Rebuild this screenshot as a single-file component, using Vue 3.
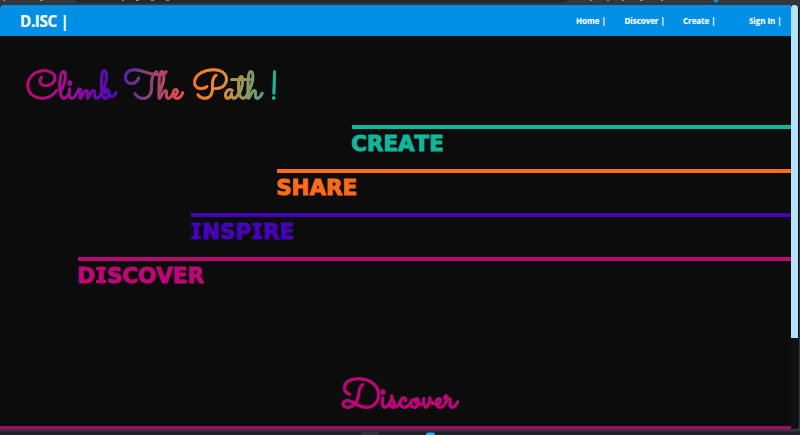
<script setup>
const links = [
  { label: 'Home |', key: 'home' },
  { label: 'Discover |', key: 'discover' },
  { label: 'Create |', key: 'create' },
  { label: 'Sign In |', key: 'sign' },
]
const steps = ['CREATE', 'SHARE', 'INSPIRE', 'DISCOVER']
</script>

<template>
  <div class="screen">
    <div class="chrome">
      <svg width="800" height="5" viewBox="0 0 800 5">
        <rect width="800" height="5" fill="#34363c" />
        <path d="M75 0H568Q566 3 560 3H82Q77 3 75 0Z" fill="#25262c" />
        <path d="M3 .5h2M40 .5h3M122 .5h2M136 .5h3M151 .5h3M166 .5h3M590 .5h2M607 .5h2M622 .5h2M640 .5h3M661 .5h2" stroke="#8b8d91" />
        <circle cx="716" cy="0" r="2.5" fill="#1689d8" />
      </svg>
    </div>
    <div class="view">
      <div class="page">
        <header class="nav">
          <div class="brand">D.ISC |</div>
          <nav class="links">
            <a v-for="l in links" :key="l.key" :class="l.key">{{ l.label }}</a>
          </nav>
        </header>
        <main>
          <h1 class="hero"><span>Climb</span><span>The</span><span>Path</span><span>!</span></h1>
          <section class="steps">
            <div v-for="s in steps" :key="s" class="step" :class="'step-' + s.toLowerCase()">
              <span class="word"><span v-for="(c, i) in s" :key="i" :class="{ slab: c === 'I' }">{{ c }}</span></span>
            </div>
          </section>
          <h2 class="heading">Discover</h2>
          <div class="rule"></div>
        </main>
      </div>
      <div class="scrollbar"><div class="thumb"></div></div>
    </div>
    <footer class="taskbar">
      <svg width="800" height="6" viewBox="0 0 800 6">
        <rect x="361" y="3" width="18" height="3" rx="1" fill="#2d333b" />
        <rect x="426" y="3.5" width="9" height="5" rx="2" fill="#35a7e6" />
      </svg>
    </footer>
  </div>
</template>

<style>
body { background: #0c0c0c; overflow: hidden; }
</style>

<style scoped>
.screen { width: 800px; height: 435px; display: flex; flex-direction: column; background: #34363c; overflow: hidden; }
.chrome { height: 5px; flex: none; }
.chrome svg, .taskbar svg { display: block; }
.view { height: 424px; flex: none; display: flex; margin-right: 1px; background: #0c0c0c; border-radius: 4px 4px 4px 0; overflow: hidden; }
.page { width: 791px; flex: none; }
.nav { height: 31px; background: #008fe4; color: #fff; display: flex; align-items: center; justify-content: space-between; padding: 0 9px 0 20px; font-family: "Open Sans", "Noto Sans", sans-serif; font-weight: 700; }
.brand { font-size: 15.2px; letter-spacing: -0.35px; line-height: 34px; -webkit-text-stroke: 0.2px #fff; }
.links { display: flex; font-size: 8px; letter-spacing: -0.05px; line-height: 34px; white-space: nowrap; -webkit-text-stroke: 0.1px #fff; }
.links a { flex: none; }
.home { width: 48.5px; }
.discover { width: 58.5px; }
.create { width: 66px; }
.sign { width: 33px; }
.hero, .heading { margin: 0; font-family: "Sacramento", cursive; font-weight: 700; }
.hero { display: grid; grid-template-columns: 98px 68px 77px 14px; width: 257px; height: 50px; margin: 29px 0 0 26px; line-height: 50px; font-size: 38.2px; color: transparent; -webkit-text-stroke: 0.3px transparent; background: linear-gradient(90deg, #b9086f 0, #a3108c 15%, #4c09be 34%, #753f86 45%, #e64c45 60%, #f7791e 67%, #f0872e 74%, #7a9b68 88%, #14b795 97%); -webkit-background-clip: text; background-clip: text; }
.steps { margin-top: 10px; }
.step { height: 40px; border-top: 4px solid; }
.step-create { margin-left: 352px; color: #12b69a; }
.step-share { margin-left: 277px; color: #fc6b1b; }
.step-inspire { margin-left: 191px; color: #4603b6; }
.step-discover { margin-left: 78px; color: #bd0776; }
.word { display: inline-flex; margin-left: -0.8px; font: 700 21.4px/30px "DejaVu Sans", sans-serif; -webkit-text-stroke: 1px currentColor; }
.slab { padding: 0 2px; background: linear-gradient(currentColor, currentColor) 50% 6px / 10px 3px no-repeat, linear-gradient(currentColor, currentColor) 50% 19px / 10px 3px no-repeat; }
.heading { height: 50px; margin-top: 73px; padding-left: 6px; text-align: center; font-size: 38.5px; line-height: 50px; color: #b90778; -webkit-text-stroke: 0.3px currentColor; }
.rule { height: 3px; margin-top: 2px; background: #a00b69; }
.scrollbar { width: 8px; flex: none; background: #101114; }
.thumb { width: 7px; height: 333px; border-radius: 3px 3px 0 0; background: #b5e2fc; }
.taskbar { height: 6px; flex: none; background: linear-gradient(#4b3449 0, #35313b 30%, #20242b 50%, #1b2129 100%); }
</style>
